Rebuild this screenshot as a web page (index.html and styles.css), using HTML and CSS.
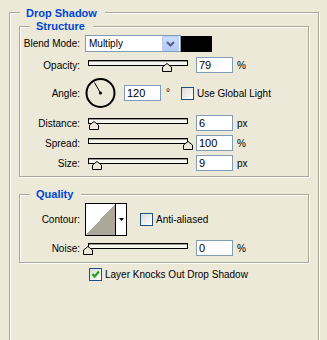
FILE: index.html
```
<!DOCTYPE html>
<html lang="en">
<head>
    <meta charset="UTF-8">
    <title>Drop Shadow</title>
    <link rel="stylesheet" href="styles.css">
</head>
<body>
    <div class="group outer">
        <span class="legend">Drop Shadow</span>

        <div class="group structure">
            <span class="legend">Structure</span>

            <div class="row blend">
                <span class="label">Blend Mode:</span>
                <div class="select">
                    <span class="select-text">Multiply</span>
                    <span class="select-btn">
                        <svg width="9" height="6" viewBox="0 0 9 6"><polyline points="1,1 4.5,4.5 8,1" fill="none" stroke="#4d6185" stroke-width="2"/></svg>
                    </span>
                </div>
                <span class="swatch"></span>
            </div>

            <div class="row opacity">
                <span class="label">Opacity:</span>
                <div class="slider">
                    <div class="track"></div>
                    <svg class="thumb" style="left: 74px" width="10" height="9" viewBox="0 0 10 9"><polygon points="0.5,8.5 0.5,4 5,0.5 9.5,4 9.5,8.5" fill="#ece9d8" stroke="#000"/></svg>
                </div>
                <input class="field" type="text" value="79">
                <span class="unit">%</span>
            </div>

            <div class="row angle">
                <span class="label">Angle:</span>
                <svg class="dial" width="31" height="32" viewBox="0 0 31 32">
                    <circle cx="15.5" cy="16" r="14" fill="none" stroke="#000" stroke-width="2"/>
                    <line x1="15.5" y1="16" x2="9.5" y2="5.6" stroke="#000" stroke-width="1"/>
                    <circle cx="15.5" cy="16" r="1.6" fill="#000"/>
                </svg>
                <input class="field angle-field" type="text" value="120">
                <span class="deg">°</span>
                <span class="check"></span>
                <span class="check-text">Use Global Light</span>
            </div>

            <div class="row distance">
                <span class="label">Distance:</span>
                <div class="slider">
                    <div class="track"></div>
                    <svg class="thumb" style="left: 1px" width="10" height="9" viewBox="0 0 10 9"><polygon points="0.5,8.5 0.5,4 5,0.5 9.5,4 9.5,8.5" fill="#ece9d8" stroke="#000"/></svg>
                </div>
                <input class="field" type="text" value="6">
                <span class="unit">px</span>
            </div>

            <div class="row">
                <span class="label">Spread:</span>
                <div class="slider">
                    <div class="track"></div>
                    <svg class="thumb" style="left: 95px" width="10" height="9" viewBox="0 0 10 9"><polygon points="0.5,8.5 0.5,4 5,0.5 9.5,4 9.5,8.5" fill="#ece9d8" stroke="#000"/></svg>
                </div>
                <input class="field" type="text" value="100">
                <span class="unit">%</span>
            </div>

            <div class="row">
                <span class="label">Size:</span>
                <div class="slider">
                    <div class="track"></div>
                    <svg class="thumb" style="left: 4px" width="10" height="9" viewBox="0 0 10 9"><polygon points="0.5,8.5 0.5,4 5,0.5 9.5,4 9.5,8.5" fill="#ece9d8" stroke="#000"/></svg>
                </div>
                <input class="field" type="text" value="9">
                <span class="unit">px</span>
            </div>
        </div>

        <div class="group quality">
            <span class="legend">Quality</span>

            <div class="row contour">
                <span class="label">Contour:</span>
                <div class="contour-box">
                    <span class="contour-preview"></span>
                    <span class="contour-arrow">
                        <svg width="5" height="3" viewBox="0 0 5 3"><polygon points="0,0 5,0 2.5,3" fill="#000"/></svg>
                    </span>
                </div>
                <span class="check aa"></span>
                <span class="check-text">Anti-aliased</span>
            </div>

            <div class="row noise">
                <span class="label">Noise:</span>
                <div class="slider">
                    <div class="track"></div>
                    <svg class="thumb" style="left: -5px" width="10" height="9" viewBox="0 0 10 9"><polygon points="0.5,8.5 0.5,4 5,0.5 9.5,4 9.5,8.5" fill="#ece9d8" stroke="#000"/></svg>
                </div>
                <input class="field" type="text" value="0">
                <span class="unit">%</span>
            </div>
        </div>

        <div class="knock">
            <span class="check checked">
                <svg width="11" height="11" viewBox="0 0 11 11"><polyline points="2.5,5 4.5,7.5 9,2.5" fill="none" stroke="#21a121" stroke-width="2.2"/></svg>
            </span>
            <span class="check-text">Layer Knocks Out Drop Shadow</span>
        </div>
    </div>
</body>
</html>
```

FILE: styles.css
```
* {
    box-sizing: border-box;
}

body {
    margin: 0;
    background-color: #ece9d8;
    font-family: "Liberation Sans", Arial, sans-serif;
    font-size: 10px;
    color: #000;
}

/* etched group box */
.group {
    position: relative;
    border: 1px solid #aca899;
    box-shadow: 1px 1px 0 #fff, inset 1px 1px 0 #fff;
}

.legend {
    position: absolute;
    top: -8px;
    left: 10px;
    padding: 0 8px 0 6px;
    background-color: #ece9d8;
    color: #0046d5;
    font-size: 11px;
    font-weight: bold;
    line-height: 14px;
}

.outer {
    margin: 12px 0 0 9px;
    width: 310px;
    height: 340px;
    padding: 13px 9px 0;
}

.outer > .legend {
    top: -7px;
}

.structure {
    padding: 8px 0 5px;
}

.quality {
    margin-top: 17px;
    padding: 8px 0 6px;
}

.row {
    display: flex;
    align-items: center;
    height: 16px;
    margin-top: 4px;
}

.row.blend {
    height: 17px;
    margin-top: 0;
}

.row.opacity {
    margin-top: 5px;
}

.row.angle {
    height: 32px;
}

.row.distance {
    margin-top: 6px;
}

.row.contour {
    height: 33px;
    margin-top: 0;
}

.label {
    width: 60px;
    margin-right: 5px;
    text-align: right;
}

/* blend mode combo */
.select {
    display: flex;
    align-items: center;
    width: 96px;
    height: 17px;
    padding-left: 3px;
    border: 1px solid #7f9db9;
    background-color: #fff;
}

.select-text {
    flex: 1;
}

.select-btn {
    display: flex;
    align-items: center;
    justify-content: center;
    width: 17px;
    height: 15px;
    margin-right: 1px;
    border: 1px solid #b9ccf5;
    border-radius: 1px;
    background: linear-gradient(#cddcfd, #b5c9f6);
}

.swatch {
    width: 31px;
    height: 16px;
    margin-top: 1px;
    background-color: #000;
}

/* sliders */
.slider {
    position: relative;
    width: 100px;
    height: 16px;
    margin: 0 8px 0 3px;
}

.track {
    height: 6px;
    margin-top: 3px;
    border: 1px solid #000;
    background-color: #f7f6ef;
    box-shadow: inset 0 1px 0 #9d9a8c;
}

.thumb {
    position: absolute;
    top: 6px;
}

.field {
    width: 37px;
    height: 16px;
    margin: 0;
    padding: 0 0 0 2px;
    border: 1px solid #7f9db9;
    background-color: #fff;
    font-family: "Liberation Sans", Arial, sans-serif;
    font-size: 11px;
    color: #000;
}

.unit {
    margin-left: 4px;
}

/* angle */
.angle-field {
    margin-left: 8px;
}

.deg {
    width: 15px;
    margin-left: 5px;
    line-height: 16px;
}

.check {
    display: flex;
    align-items: center;
    justify-content: center;
    width: 13px;
    height: 13px;
    margin-right: 3px;
    border: 1px solid #1c5180;
    background: linear-gradient(135deg, #dcdcd5, #fff);
}

/* contour */
.contour-box {
    display: flex;
    width: 42px;
    height: 33px;
    border: 1px solid #000;
    background-color: #fff;
}

.contour-preview {
    width: 30px;
    border-right: 1px solid #000;
    background: linear-gradient(to top left, #aca899 50%, #fff 50%);
}

.contour-arrow {
    display: flex;
    flex: 1;
    align-items: center;
    justify-content: center;
}

.check.aa {
    margin-left: 13px;
}

.row.noise {
    margin-top: 4px;
}

.knock {
    display: flex;
    align-items: center;
    height: 13px;
    margin-top: 5px;
    padding-left: 70px;
}
```
